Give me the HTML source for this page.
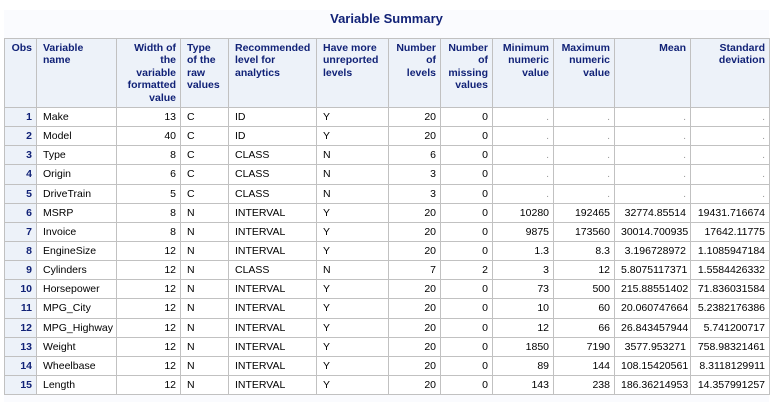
<!DOCTYPE html>
<html><head><style>
body{margin:0;background:#fff;font-family:"Liberation Sans",Arial,sans-serif;}
.wrap{position:absolute;left:4px;top:10px;width:765px;height:392px;background:#fafbfe;}
.title{height:28px;line-height:18px;text-align:center;font-weight:bold;font-size:13px;color:#112277;}
table{position:absolute;left:0;top:28px;border-collapse:collapse;font-size:10.5px;width:765px;table-layout:fixed;}
td,th{border:1px solid #c1c1c1;padding:0 4px 0 6px;white-space:nowrap;overflow:hidden;}
th{background:#edf2f9;color:#112277;font-weight:bold;vertical-align:top;line-height:12.4px;padding-top:3px;padding-bottom:2px;height:69px;box-sizing:border-box;}
td{height:18.15px;line-height:18px;padding-top:0;padding-bottom:0;background:#fff;color:#000;box-sizing:content-box;}
td.o{background:#edf2f9;color:#112277;font-weight:bold;text-align:right;}
.r{text-align:right}.l{text-align:left}
td.d{color:#999;text-align:right}
</style></head><body><div class="wrap"><div class="title">Variable Summary</div>
<table>
<colgroup><col style="width:32px"><col style="width:80px"><col style="width:64px"><col style="width:48px"><col style="width:88px"><col style="width:72px"><col style="width:52px"><col style="width:52px"><col style="width:61px"><col style="width:61px"><col style="width:76px"><col style="width:79px"></colgroup>
<tr><th class="r">Obs</th><th class="l">Variable<br>name</th><th class="r">Width of<br>the<br>variable<br>formatted<br>value</th><th class="l">Type<br>of the<br>raw<br>values</th><th class="l">Recommended<br>level for<br>analytics</th><th class="l">Have more<br>unreported<br>levels</th><th class="r">Number<br>of<br>levels</th><th class="r">Number<br>of<br>missing<br>values</th><th class="r">Minimum<br>numeric<br>value</th><th class="r">Maximum<br>numeric<br>value</th><th class="r">Mean</th><th class="r">Standard<br>deviation</th></tr>
<tr><td class="o">1</td><td>Make</td><td class="r">13</td><td>C</td><td>ID</td><td>Y</td><td class="r">20</td><td class="r">0</td><td class="d">.</td><td class="d">.</td><td class="d">.</td><td class="d">.</td></tr>
<tr><td class="o">2</td><td>Model</td><td class="r">40</td><td>C</td><td>ID</td><td>Y</td><td class="r">20</td><td class="r">0</td><td class="d">.</td><td class="d">.</td><td class="d">.</td><td class="d">.</td></tr>
<tr><td class="o">3</td><td>Type</td><td class="r">8</td><td>C</td><td>CLASS</td><td>N</td><td class="r">6</td><td class="r">0</td><td class="d">.</td><td class="d">.</td><td class="d">.</td><td class="d">.</td></tr>
<tr><td class="o">4</td><td>Origin</td><td class="r">6</td><td>C</td><td>CLASS</td><td>N</td><td class="r">3</td><td class="r">0</td><td class="d">.</td><td class="d">.</td><td class="d">.</td><td class="d">.</td></tr>
<tr><td class="o">5</td><td>DriveTrain</td><td class="r">5</td><td>C</td><td>CLASS</td><td>N</td><td class="r">3</td><td class="r">0</td><td class="d">.</td><td class="d">.</td><td class="d">.</td><td class="d">.</td></tr>
<tr><td class="o">6</td><td>MSRP</td><td class="r">8</td><td>N</td><td>INTERVAL</td><td>Y</td><td class="r">20</td><td class="r">0</td><td class="r">10280</td><td class="r">192465</td><td class="r">32774.85514</td><td class="r">19431.716674</td></tr>
<tr><td class="o">7</td><td>Invoice</td><td class="r">8</td><td>N</td><td>INTERVAL</td><td>Y</td><td class="r">20</td><td class="r">0</td><td class="r">9875</td><td class="r">173560</td><td class="r">30014.700935</td><td class="r">17642.11775</td></tr>
<tr><td class="o">8</td><td>EngineSize</td><td class="r">12</td><td>N</td><td>INTERVAL</td><td>Y</td><td class="r">20</td><td class="r">0</td><td class="r">1.3</td><td class="r">8.3</td><td class="r">3.196728972</td><td class="r">1.1085947184</td></tr>
<tr><td class="o">9</td><td>Cylinders</td><td class="r">12</td><td>N</td><td>CLASS</td><td>N</td><td class="r">7</td><td class="r">2</td><td class="r">3</td><td class="r">12</td><td class="r">5.8075117371</td><td class="r">1.5584426332</td></tr>
<tr><td class="o">10</td><td>Horsepower</td><td class="r">12</td><td>N</td><td>INTERVAL</td><td>Y</td><td class="r">20</td><td class="r">0</td><td class="r">73</td><td class="r">500</td><td class="r">215.88551402</td><td class="r">71.836031584</td></tr>
<tr><td class="o">11</td><td>MPG_City</td><td class="r">12</td><td>N</td><td>INTERVAL</td><td>Y</td><td class="r">20</td><td class="r">0</td><td class="r">10</td><td class="r">60</td><td class="r">20.060747664</td><td class="r">5.2382176386</td></tr>
<tr><td class="o">12</td><td>MPG_Highway</td><td class="r">12</td><td>N</td><td>INTERVAL</td><td>Y</td><td class="r">20</td><td class="r">0</td><td class="r">12</td><td class="r">66</td><td class="r">26.843457944</td><td class="r">5.741200717</td></tr>
<tr><td class="o">13</td><td>Weight</td><td class="r">12</td><td>N</td><td>INTERVAL</td><td>Y</td><td class="r">20</td><td class="r">0</td><td class="r">1850</td><td class="r">7190</td><td class="r">3577.953271</td><td class="r">758.98321461</td></tr>
<tr><td class="o">14</td><td>Wheelbase</td><td class="r">12</td><td>N</td><td>INTERVAL</td><td>Y</td><td class="r">20</td><td class="r">0</td><td class="r">89</td><td class="r">144</td><td class="r">108.15420561</td><td class="r">8.3118129911</td></tr>
<tr><td class="o">15</td><td>Length</td><td class="r">12</td><td>N</td><td>INTERVAL</td><td>Y</td><td class="r">20</td><td class="r">0</td><td class="r">143</td><td class="r">238</td><td class="r">186.36214953</td><td class="r">14.357991257</td></tr>
</table></div></body></html>
